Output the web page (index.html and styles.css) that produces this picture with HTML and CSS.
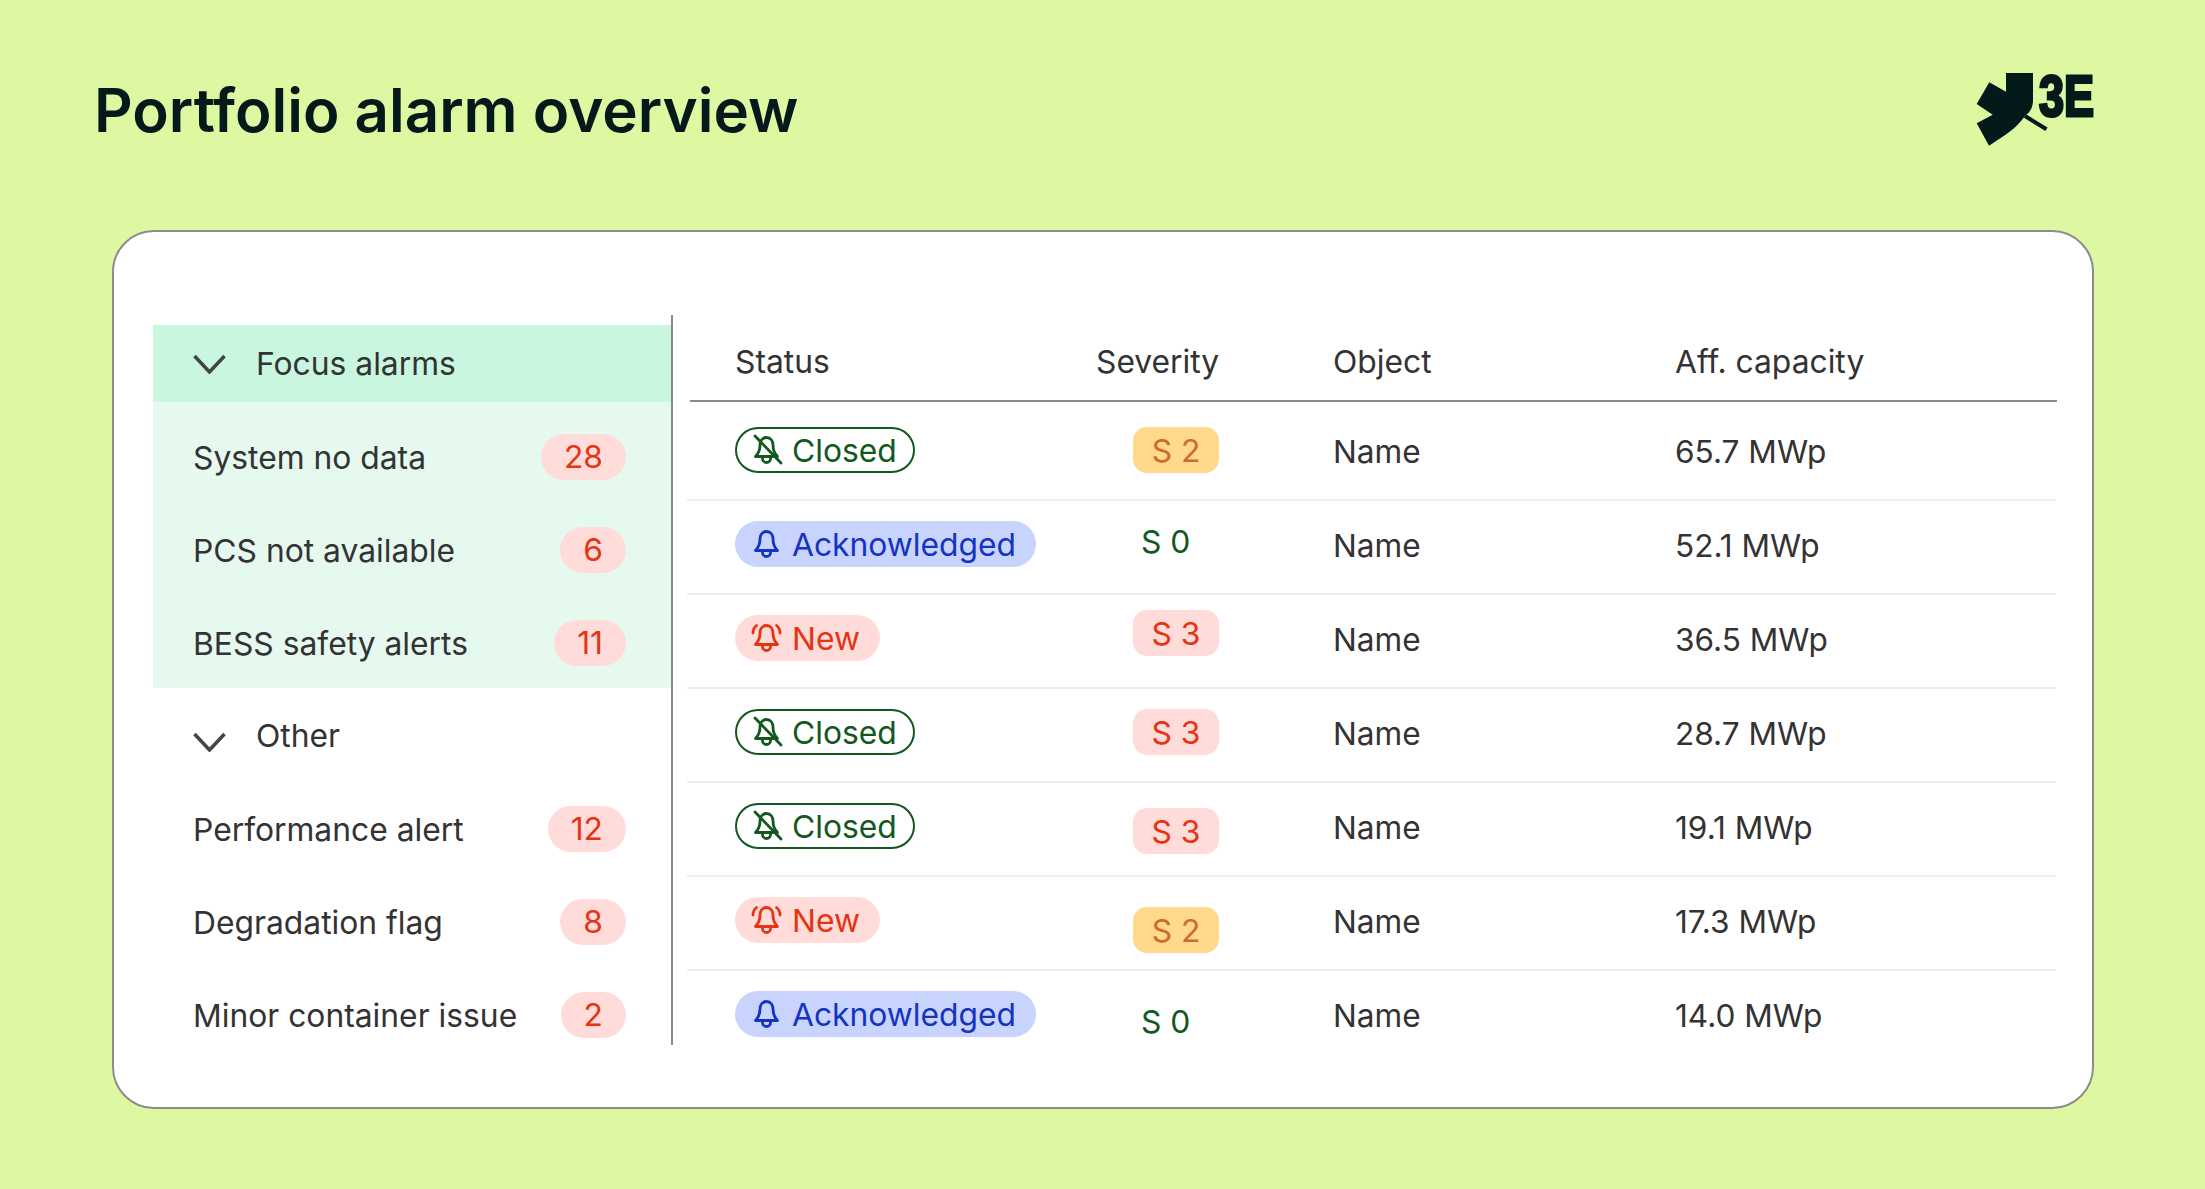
FILE: index.html
```html
<!DOCTYPE html>
<html lang="en">
<head>
<meta charset="utf-8">
<title>Portfolio alarm overview</title>
<link rel="stylesheet" href="styles.css">
</head>
<body>
<svg class="defs" width="0" height="0" aria-hidden="true">
  <defs>
    <g id="bell">
      <path d="M12.500 1.500C8.200 1.500 6 5 6 9C6 14 5 17 1.500 20.500H23.500C20 17 19 14 19 9C19 5 16.800 1.500 12.500 1.500Z"/>
      <path d="M8.500 21V22.500A4 4 0 0 0 16.500 22.500V21"/>
    </g>
  </defs>
</svg>
<header class="top">
  <h1 class="title">Portfolio alarm overview</h1>
  <svg class="logo" viewBox="70 25 170 90" width="170" height="90" role="img" aria-label="3E">
    <path class="leaf" d="M106 33H133V60C133 68 130 72 125 76C115 90 105 95 89 105.700L76.700 83.300L92.700 74.700L76.700 64L89.300 42.300L106 51.700Z"/>
    <path class="stem" d="M125 76L146.500 89.300"/>
    <text class="mark" transform="translate(139 75.500) scale(.79 1)">3E</text>
  </svg>
</header>
<main class="wrap">
  <section class="card">
    <aside class="side">
      <div class="focus">
        <div class="head head-focus">
          <svg class="chev" viewBox="0 0 33 20"><path d="M1.500 2L16.500 18L31.500 2"/></svg>
          <span>Focus alarms</span>
        </div>
        <ul class="items items-focus">
          <li class="item"><span>System no data</span><b class="count">28</b></li>
          <li class="item"><span>PCS not available</span><b class="count">6</b></li>
          <li class="item"><span>BESS safety alerts</span><b class="count">11</b></li>
        </ul>
      </div>
      <div class="head head-other">
        <svg class="chev chev-low" viewBox="0 0 33 20"><path d="M1.500 2L16.500 18L31.500 2"/></svg>
        <span>Other</span>
      </div>
      <ul class="items items-other">
        <li class="item"><span>Performance alert</span><b class="count">12</b></li>
        <li class="item"><span>Degradation flag</span><b class="count">8</b></li>
        <li class="item"><span>Minor container issue</span><b class="count">2</b></li>
      </ul>
    </aside>
    <div class="table">
      <div class="row row-head">
        <span class="cell">Status</span><span class="cell">Severity</span><span class="cell">Object</span><span class="cell">Aff. capacity</span>
      </div>
      <div class="row row-first">
        <div><span class="pill closed"><svg class="bell" viewBox="0 0 25 28"><use href="#bell"/><path d="M1 0L27 27"/></svg>Closed</span></div>
        <div class="sev-cell"><span class="sev s2">S 2</span></div>
        <span class="cell data">Name</span><span class="cell data">65.7 MWp</span>
      </div>
      <div class="row">
        <div><span class="pill ack"><svg class="bell" viewBox="0 0 25 28"><use href="#bell"/></svg>Acknowledged</span></div>
        <div class="sev-cell"><span class="s0 up2">S 0</span></div>
        <span class="cell data">Name</span><span class="cell data">52.1 MWp</span>
      </div>
      <div class="row">
        <div><span class="pill new"><svg class="bell" viewBox="0 0 25 28"><use href="#bell"/><path d="M-1 9C-1 6 0 3.500 2.500 1.500M26 9C26 6 25 3.500 22.500 1.500"/></svg>New</span></div>
        <div class="sev-cell up5"><span class="sev s3">S 3</span></div>
        <span class="cell data">Name</span><span class="cell data">36.5 MWp</span>
      </div>
      <div class="row">
        <div><span class="pill closed"><svg class="bell" viewBox="0 0 25 28"><use href="#bell"/><path d="M1 0L27 27"/></svg>Closed</span></div>
        <div class="sev-cell"><span class="sev s3">S 3</span></div>
        <span class="cell data">Name</span><span class="cell data">28.7 MWp</span>
      </div>
      <div class="row">
        <div><span class="pill closed"><svg class="bell" viewBox="0 0 25 28"><use href="#bell"/><path d="M1 0L27 27"/></svg>Closed</span></div>
        <div class="sev-cell down5"><span class="sev s3">S 3</span></div>
        <span class="cell data">Name</span><span class="cell data">19.1 MWp</span>
      </div>
      <div class="row">
        <div><span class="pill new"><svg class="bell" viewBox="0 0 25 28"><use href="#bell"/><path d="M-1 9C-1 6 0 3.500 2.500 1.500M26 9C26 6 25 3.500 22.500 1.500"/></svg>New</span></div>
        <div class="sev-cell down10"><span class="sev s2">S 2</span></div>
        <span class="cell data">Name</span><span class="cell data">17.3 MWp</span>
      </div>
      <div class="row row-last">
        <div><span class="pill ack"><svg class="bell" viewBox="0 0 25 28"><use href="#bell"/></svg>Acknowledged</span></div>
        <div class="sev-cell"><span class="s0 down8">S 0</span></div>
        <span class="cell data">Name</span><span class="cell data">14.0 MWp</span>
      </div>
    </div>
  </section>
</main>
</body>
</html>
```
FILE: styles.css
```css
* { box-sizing: border-box; }
html, body { margin: 0; padding: 0; }
body {
  padding-top: 65px;
  background: #def7a1;
  color: #333;
  font-family: "Inter", "Liberation Sans", sans-serif;
  font-size: 31.800px;
  min-height: 1189px;
}
.defs { display: block; height: 0; }
.top {
  display: flex;
  justify-content: space-between;
  align-items: center;
  height: 90px;
  padding: 0 65px 0 94px;
}
.title {
  margin: 0;
  color: #03191a;
  font-size: 60px;
  font-weight: 600;
}
.leaf { fill: #03191a; }
.stem { stroke: #03191a; stroke-width: 4; fill: none; }
.mark {
  font-family: "Liberation Sans", sans-serif;
  font-size: 57px;
  font-weight: 700;
  fill: #03191a;
  stroke: #03191a;
  stroke-width: 3;
}
.wrap { padding: 75px 0 0 112px; }
.card {
  display: flex;
  align-items: flex-start;
  width: 1982px;
  height: 879px;
  padding: 83px 0 0 39px;
  background: #fff;
  border: 2px solid #8c8c8c;
  border-radius: 42px;
}
.side {
  flex: none;
  width: 520px;
  height: 730px;
  padding-top: 10px;
  border-right: 2px solid #8a8a8a;
}
.focus { background: #e6f9ef; }
.head {
  display: flex;
  align-items: center;
  gap: 30px;
  padding-left: 40px;
}
.head-focus { height: 77px; background: #c8f6de; }
.head-other { height: 95px; }
.chev { width: 33px; height: 20px; flex: none; }
.chev path { fill: none; stroke: #444; stroke-width: 3.500; }
.chev-low { margin-top: 12px; }
.items {
  display: flex;
  flex-direction: column;
  gap: 47px;
  margin: 0;
  padding: 0 45px 0 40px;
  list-style: none;
}
.items-focus { padding-top: 32px; padding-bottom: 22px; }
.items-other { padding-top: 23px; }
.item {
  display: flex;
  justify-content: space-between;
  align-items: center;
  height: 46px;
}
.count {
  min-width: 46px;
  padding: 0 23px;
  height: 46px;
  line-height: 46px;
  border-radius: 23px;
  background: #ffdcd9;
  color: #e63312;
  font-weight: 400;
  text-align: center;
}
.table { flex: none; width: 1367px; margin-left: 17px; }
.row {
  display: grid;
  grid-template-columns: 361px 237px 342px 1fr;
  align-items: start;
  height: 94px;
  margin: 0 1px 0 -3px;
  padding: 20px 0 0 48px;
  border-bottom: 2px solid #eeeeee;
}
.row-head { height: 87px; margin: 0; padding-top: 24px; padding-left: 45px; border-bottom-color: #8a8a8a; }
.row-first { height: 99px; padding-top: 25px; }
.row-last { border-bottom: 0; }
.cell { line-height: 46px; }
.data { margin-top: 2px; font-size: 31.600px; }
.pill {
  display: inline-flex;
  align-items: center;
  gap: 13.500px;
  height: 46px;
  padding: 0 20px 0 18.500px;
  border-radius: 23px;
}
.bell { width: 25px; height: 28px; flex: none; overflow: visible; fill: none; stroke: currentColor; stroke-width: 2.800; stroke-linejoin: round; stroke-linecap: round; }
.closed { border: 2px solid #12581f; color: #12581f; padding-left: 16.500px; padding-right: 16px; }
.ack { background: #c8d4fd; color: #1434c0; }
.new { background: #ffdcd9; color: #e63312; }
.sev-cell { padding-left: 37px; }
.sev {
  display: block;
  width: 86px;
  height: 46px;
  padding-top: 1px;
  line-height: 46px;
  border-radius: 14px;
  text-align: center;
}
.s2 { background: #ffd98c; color: #cf6b2d; }
.s3 { background: #ffdcd9; color: #e63312; }
.s0 { display: block; margin-left: 8px; line-height: 46px; color: #12581f; }
.up2 { margin-top: -2px; }
.up5 { margin-top: -5px; }
.down5 { margin-top: 5px; }
.down8 { margin-top: 8px; }
.down10 { margin-top: 10px; }
```
